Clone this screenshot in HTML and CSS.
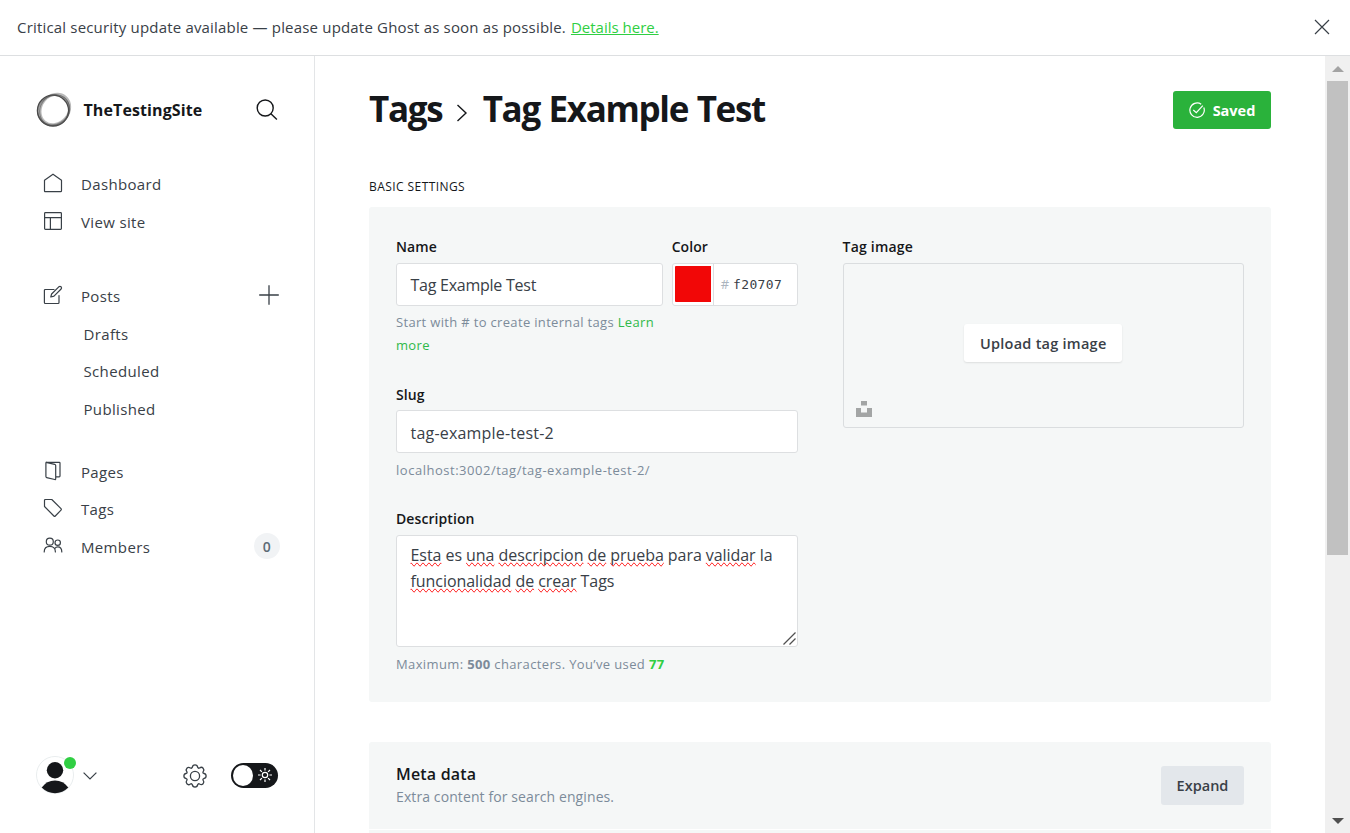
FILE: index.html
```html
<!DOCTYPE html>
<html lang="en">
<head>
<meta charset="utf-8">
<title>Tag Example Test</title>
<link rel="stylesheet" href="styles.css">
</head>
<body>
<header class="banner">
  <p class="banner-text"><span class="banner-msg">Critical security update available — please update Ghost as soon as possible.</span> <a class="banner-link">Details here.</a></p>
  <svg class="close" width="16" height="16" viewBox="0 0 16 16"><path d="M1 1l14 14M15 1L1 15"/></svg>
</header>
<div class="app">
  <nav class="sidebar">
    <div class="site">
      <svg class="logo" width="36" height="36" viewBox="0 0 36 36" fill="none">
        <ellipse cx="19" cy="17.300" rx="16.200" ry="13.800" stroke="#8a8a8a" stroke-width="2.600" stroke-opacity=".6" transform="rotate(-50 19 17.300)"/>
        <ellipse cx="17.600" cy="18.200" rx="16" ry="14.600" stroke="#666" stroke-width="1.800" stroke-opacity=".7" transform="rotate(-30 17.600 18.200)"/>
        <ellipse cx="17" cy="18.600" rx="15.600" ry="15.400" stroke="#4a4a4a" stroke-width="1.300"/>
        <ellipse cx="18.600" cy="18.200" rx="14.400" ry="16" stroke="#555" stroke-width="1" stroke-opacity=".6" transform="rotate(35 18.600 18.200)"/>
      </svg>
      <span class="site-name">TheTestingSite</span>
      <svg class="search" width="22" height="22" viewBox="0 0 22 22"><circle cx="9.2" cy="9" r="8"/><path d="M14.9 14.8l6 5.8"/></svg>
    </div>
    <ul class="menu">
      <li><svg class="ico low" viewBox="0 0 20 20"><path d="M1.5 7.2L10 1.2l8.500 6v10.600q0 .9-.9.900H2.400q-.9 0-.9-.9z"/></svg><span>Dashboard</span></li>
      <li><svg class="ico low" viewBox="0 0 20 20"><rect x="1.600" y="1.600" width="16.800" height="16.800" rx=".8"/><path d="M1.600 6.700h16.800M7.400 6.700v11.700"/></svg><span>View site</span></li>
    </ul>
    <ul class="menu posts">
      <li><svg class="ico" viewBox="0 0 20 20"><path d="M11 4.500H2.300q-.9 0-.9.900v12.200q0 .9.900.9h12.800q.9 0 .9-.9V10.500M7.800 12l.8-3 7.200-7.200q1.200-1 2.300 0 1 1.200 0 2.200L11 11.200z"/></svg><span>Posts</span><svg class="plus" width="20" height="20" viewBox="0 0 20 20"><path d="M10 .2v19.600M.2 10h19.600"/></svg></li>
      <li class="sub"><span>Drafts</span></li>
      <li class="sub"><span>Scheduled</span></li>
      <li class="sub"><span>Published</span></li>
    </ul>
    <ul class="menu">
      <li><svg class="ico low" viewBox="0 0 20 20"><path d="M3 1.400l8.700 1.900q1 .3 1 1.200v13.200q0 1.100-1 .8l-8-1.900q-.8-.2-.8-1V2q0-.6.600-.6h12.800q.7 0 .7.700v12.900q0 .8-.8.800h-3.300"/></svg><span>Pages</span></li>
      <li><svg class="ico" viewBox="0 0 20 20"><path d="M2.400 1.500h6.400l9.200 9.200q.7.700 0 1.400l-5.700 5.900q-.7.700-1.400 0L1.500 8.500V2.400q0-.9.900-.9z"/></svg><span>Tags</span></li>
      <li><svg class="ico" viewBox="0 0 20 20"><circle cx="6.800" cy="6.700" r="3.500"/><circle cx="14.700" cy="7.700" r="2.700"/><path d="M1.200 17q0-5.600 5.600-5.600T12.400 17M11.900 13.500q.9-1.600 2.900-1.600 4 0 4 5.100"/></svg><span>Members</span><b class="count">0</b></li>
    </ul>
    <footer class="user">
      <div class="avatar">
        <svg width="38" height="38" viewBox="0 0 38 38"><circle cx="19" cy="19" r="18.500" fill="#fff" stroke="#e9edee"/><circle cx="19" cy="14.200" r="8.200" fill="#15171a" stroke="none"/><path d="M5.700 31.600q5-7 13.300-7t13.300 7A18.500 18.500 0 0 1 5.700 31.600z" fill="#15171a" stroke="none"/></svg>
        <i class="dot"></i>
      </div>
      <svg class="chev" width="14" height="8" viewBox="0 0 14 8"><path d="M.6.600L7 7 13.400.600"/></svg>
      <svg class="gear" width="24" height="24" viewBox="0 0 24 24"><circle cx="12" cy="12" r="4.600"/><path d="M9.300 3.300Q9.600.9 12 .9t2.700 2.400q.5 1.400 1.900.7 2-1.500 3.500.2t.1 3.400q-.8 1.400.7 1.900 2.200.3 2.200 2.500t-2.200 2.500q-1.500.5-.7 1.900 1.400 1.800-.1 3.400t-3.500.2q-1.400-.7-1.900.7-.3 2.400-2.700 2.400t-2.700-2.400q-.5-1.400-1.900-.7-2 1.500-3.500-.2t-.1-3.400q.8-1.400-.7-1.900Q.9 14.200.9 12t2.200-2.500q1.500-.5.700-1.900-1.400-1.800.1-3.400t3.500-.2q1.400.7 1.900-.7z"/></svg>
      <div class="toggle"><i class="knob"></i>
        <svg width="14" height="14" viewBox="0 0 14 14"><circle cx="7" cy="7" r="2.700"/><path d="M7 0v2.600M7 11.400V14M0 7h2.600M11.400 7H14M2 2l1.900 1.900M10.100 10.100L12 12M12 2l-1.900 1.900M3.900 10.100L2 12"/></svg>
      </div>
    </footer>
  </nav>
  <main class="main">
    <div class="head">
      <h1><span>Tags</span><svg width="12" height="18" viewBox="0 0 12 18"><path d="M1.500 1l8.500 8-8.500 8"/></svg><span>Tag Example Test</span></h1>
      <button class="btn saved"><svg width="16" height="16" viewBox="0 0 16 16"><path d="M14.800 5.500A7.200 7.200 0 1 1 12.200 2.200M4.300 8l3 2.700 6.500-7"/></svg><span>Saved</span></button>
    </div>
    <h2 class="section">BASIC SETTINGS</h2>
    <section class="panel">
      <div class="col">
        <div class="pair">
          <div class="f-name"><label>Name</label><div class="input tight"><span>Tag Example Test</span></div>
            <p class="help"><span>Start with # to create internal tags <a>Learn</a></span><br><a>more</a></p></div>
          <div class="f-color"><label>Color</label><div class="input color"><i class="swatch"></i><span class="hash">#</span><span class="hex">f20707</span></div></div>
        </div>
        <div class="f-slug"><label>Slug</label><div class="input loose"><span>tag-example-test-2</span></div>
          <p class="help url"><span>localhost:3002/tag/tag-example-test-2/</span></p></div>
        <div class="f-desc"><label>Description</label>
          <div class="input area"><span><u>Esta</u> es <u>una</u> <u>descripcion</u> <u>de</u> <u>prueba</u> para <u>validar</u> la</span><br><span><u>funcionalidad</u> <u>de</u> <u>crear</u> Tags</span>
            <svg class="grip" width="13" height="13" viewBox="0 0 13 13"><path d="M.5 12.500l12-12M6.500 12.500l6-6"/></svg></div>
          <p class="help limit"><span>Maximum: <b>500</b> characters. You’ve used <b class="used">77</b></span></p></div>
      </div>
      <div class="col">
        <label class="wide">Tag image</label>
        <div class="drop"><button class="btn upload"><span>Upload tag image</span></button>
          <svg class="unsplash" width="16" height="16" viewBox="0 0 16 16"><path d="M5 0h6v4.600H5zM0 7h5v4.600h6V7h5v9H0z"/></svg></div>
      </div>
    </section>
    <section class="meta">
      <div><h4>Meta data</h4><p>Extra content for search engines.</p></div>
      <button class="btn expand"><span>Expand</span></button>
    </section>
    <section class="meta next"></section>
  </main>
  <aside class="scroll">
    <svg width="12" height="6" viewBox="0 0 12 6"><path d="M0 6l6-6 6 6z" fill="#a3a3a3"/></svg>
    <i class="thumb"></i>
    <svg class="down" width="12" height="6" viewBox="0 0 12 6"><path d="M0 0l6 6 6-6z" fill="#505050"/></svg>
  </aside>
</div>
</body>
</html>
```
FILE: styles.css
```css
* { box-sizing: border-box; }
body { margin: 0; height: 833px; overflow: hidden; display: flex; flex-direction: column; background: #fff; color: #394047; font: 16px/24px "Open Sans", "Noto Sans", sans-serif; }
p, h1, h2, h4, ul { margin: 0; padding: 0; list-style: none; font-weight: 400; }
svg { flex: none; fill: none; stroke: #394047; display: block; }
span, a { white-space: nowrap; }
button { font: inherit; border: 0; padding: 0; color: inherit; }

.banner { flex: none; height: 56px; border-bottom: 1px solid #dddfe1; display: flex; align-items: center; justify-content: space-between; padding: 0 20px 2px 17px; }
.banner-text { display: flex; gap: 5px; font-size: 15px; }
.banner-msg { letter-spacing: .18px; }
.banner-link { color: #30cf43; text-decoration: underline; }
.close { stroke-width: 1.2; }

.app { flex: 1; min-height: 0; display: flex; }
.sidebar { width: 315px; flex: none; border-right: 1px solid #e3e5e7; display: flex; flex-direction: column; padding: 36px 36px 0; }
.site { height: 36px; display: flex; align-items: center; margin-bottom: 37.150px; }
.logo { stroke: none; }
.site-name { margin-left: 11.500px; flex: 1; font-weight: 700; font-size: 16px; letter-spacing: .1px; color: #15171a; }
.search { stroke: #15171a; stroke-width: 1.400; }
.menu { margin-bottom: 25px; font-size: 15px; letter-spacing: .35px; }
.menu:first-of-type { margin-bottom: 37px; }
.menu li { height: 37.600px; display: flex; align-items: center; padding-left: 7px; }
.menu li.sub { padding-left: 47.500px; }
.ico { width: 20px; height: 20px; margin: -3px 18px 0 0; stroke-width: 1.200; stroke-linejoin: round; stroke-linecap: round; }
.ico.low { margin-top: -1px; }
.plus { margin: -2px -1px 0 auto; stroke-width: 1.300; }
.count { margin: -2px -2px 0 auto; width: 26px; height: 26px; border-radius: 50%; background: #f1f3f5; text-align: center; font-size: 14px; line-height: 27px; font-weight: 600; color: #5d6b76; }
.user { margin: auto 0 39px; height: 38px; display: flex; align-items: center; }
.avatar { position: relative; }
.dot { position: absolute; right: -2px; top: 1px; width: 12px; height: 12px; border-radius: 50%; background: #30cf43; }
.chev { margin: 2px 0 0 9px; stroke-width: 1.200; }
.gear { margin: 1px 0 0 86px; stroke-width: 1.300; }
.toggle { margin-left: 24px; width: 47px; height: 25px; border-radius: 13px; background: #15171a; display: flex; align-items: center; gap: 4.500px; padding: 0 2px; }
.toggle svg { stroke: #fff; stroke-width: 1.200; }
.knob { width: 20px; height: 21px; border-radius: 50%; background: #fff; }

.main { flex: 1; min-width: 0; padding: 35px 54px 0; overflow: hidden; }
.head { display: flex; justify-content: space-between; align-items: center; height: 38px; }
h1 { display: flex; align-items: center; margin-top: -2px; font-size: 35px; letter-spacing: -1.350px; word-spacing: 1px; font-weight: 700; color: #15171a; line-height: 38px; }
h1 svg { margin: 8px 15px 0 13.500px; stroke: #15171a; stroke-width: 1.400; }
.btn { border-radius: 3px; display: flex; align-items: center; justify-content: center; font-weight: 600; font-size: 14.500px; }
.saved { width: 98px; height: 38px; gap: 8px; background: #2ab23b; color: #fff; font-weight: 700; }
.saved span { padding-top: 1px; }
.saved svg { stroke: #fff; stroke-width: 1.200; }
.section { margin: 48px 0 11px; height: 19px; line-height: 19px; font-size: 12px; letter-spacing: .43px; color: #15171a; }
.panel { height: 495px; background: #f5f7f7; border-radius: 3px; padding: 28px 27px; display: flex; gap: 45px; }
.col { width: 401.500px; flex: none; }
.pair { display: flex; gap: 9px; height: 148px; }
.f-name { width: 267px; }
.f-color { width: 126px; }
.f-slug { height: 124px; }
.f-slug .input { margin-top: -1px; }
label { display: block; height: 28px; line-height: 24px; font-size: 14px; font-weight: 600; letter-spacing: .08px; color: #15171a; }
label.wide { letter-spacing: .22px; }
.input { height: 43px; background: #fff; border: 1px solid #dddfe1; border-radius: 3px; padding: 0 14px 0 13.500px; display: flex; align-items: center; font-size: 16px; }
.tight { letter-spacing: -.25px; }
.loose { letter-spacing: .2px; }
.loose span { padding-top: 2px; }
.help { font-size: 13px; line-height: 23px; letter-spacing: .33px; color: #7c8b9a; padding-top: 5px; }
.help.url { letter-spacing: .52px; padding-top: 6px; }
.help.limit { padding-top: 6px; letter-spacing: .37px; }
.help a { color: #30b94a; }
.help .used { color: #30cf43; }
.color { padding: 0 0 0 2px; }
.swatch { width: 36px; height: 36px; margin-top: -1px; background: #f20707; border-radius: 1px 0 0 1px; }
.hash { margin-left: 2px; border-left: 1px solid #dddfe1; padding-left: 7px; line-height: 41px; color: #abb4be; font-size: 13px; }
.hex { margin-left: 4px; font: 13px "DejaVu Sans Mono", monospace; letter-spacing: .35px; }
.area { position: relative; display: block; height: 112px; padding-top: 6px; line-height: 26px; letter-spacing: -.06px; }
.area u { text-decoration: spelling-error; }
.grip { position: absolute; right: 1px; bottom: 1px; stroke: #505050; stroke-width: 1.300; }
.drop { position: relative; height: 165px; border: 1px solid #dadddf; border-radius: 3px; display: flex; align-items: center; justify-content: center; }
.upload { width: 158px; height: 38px; background: #fff; margin-top: -5px; letter-spacing: .25px; box-shadow: 0 1px 2px rgba(0,0,0,.1); }
.upload span { padding-top: 1px; }
.unsplash { position: absolute; left: 12px; bottom: 10px; fill: #a3a5a5; stroke: none; }
.meta { margin-top: 40px; height: 87px; background: #f5f7f7; border-radius: 3px 3px 0 0; padding: 0 27px; display: flex; align-items: center; justify-content: space-between; }
.meta.next { margin-top: 1px; border-radius: 0; }
.meta h4 { font-size: 16px; font-weight: 600; letter-spacing: .18px; line-height: 23px; color: #15171a; }
.meta p { margin: -1px 0 1px; font-size: 14px; line-height: 23px; letter-spacing: .1px; color: #7c8b9a; }
.expand { width: 83px; height: 39px; background: #e3e7eb; color: #394047; }

.scroll { width: 25px; flex: none; background: #f0f0f0; display: flex; flex-direction: column; align-items: center; padding: 10px 0 9px; }
.scroll svg { stroke: none; }
.thumb { margin-top: 9px; width: 21px; height: 474px; background: #c1c1c1; }
.down { margin-top: auto; }
```
